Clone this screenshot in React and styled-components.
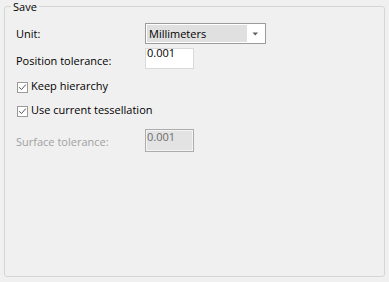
import React from "react";
import styled, { createGlobalStyle } from "styled-components";

const GlobalStyle = createGlobalStyle`
  html, body {
    margin: 0;
    padding: 0;
    background: #f0f0f0;
  }
  body {
    font-family: "Open Sans", "Noto Sans", sans-serif;
    font-size: 11px;
    color: #000;
  }
`;

const Page = styled.div`
  width: 389px;
  height: 282px;
  padding-left: 4px;
  box-sizing: border-box;
`;

const Group = styled.fieldset`
  box-sizing: border-box;
  width: 381px;
  height: 277px;
  margin: 0;
  padding: 0 0 0 11px;
  border: 1px solid #d5d5d5;
  border-radius: 3px;
`;

const Legend = styled.legend`
  margin-left: -5px;
  padding: 0 2px;
  line-height: 13px;
  font-size: 11px;
  color: #000;
`;

const Rows = styled.div`
  display: flex;
  flex-direction: column;
  padding-top: 10px;
`;

const Row = styled.div`
  display: flex;
  align-items: flex-start;
  margin-top: ${(p) => p.$gap || 0}px;
`;

const Label = styled.div`
  width: 129px;
  line-height: 15px;
  padding-top: ${(p) => p.$offset || 0}px;
  color: ${(p) => (p.$disabled ? "#a0a0a0" : "#000")};
  white-space: nowrap;
`;

const Combo = styled.div`
  box-sizing: border-box;
  width: 121px;
  height: 21px;
  border: 1px solid #9c9c9c;
  background: #fff;
  padding: 1px;
  display: flex;
`;

const Selected = styled.div`
  flex: 1;
  background: #e0e0e0;
  padding-left: 2px;
  line-height: 17px;
  color: #000;
`;

const Arrow = styled.div`
  width: 17px;
  display: flex;
  align-items: center;
  justify-content: center;
`;

const TextBox = styled.div`
  box-sizing: border-box;
  width: 49px;
  height: ${(p) => (p.$disabled ? 23 : 21)}px;
  border: 1px solid ${(p) => (p.$disabled ? "#acacac" : "#d9d9d9")};
  box-shadow: ${(p) => (p.$disabled ? "inset 0 0 0 1px #f4f4f4" : "none")};
  background: ${(p) => (p.$disabled ? "#e3e3e3" : "#fff")};
  color: ${(p) => (p.$disabled ? "#6d6d6d" : "#000")};
  padding: ${(p) => (p.$disabled ? "1px 1px 0 1px" : "0 1px")};
  line-height: ${(p) => (p.$disabled ? 12 : 8)}px;
`;

const CheckRow = styled.div`
  display: flex;
  align-items: flex-start;
  line-height: 15px;
  margin-top: ${(p) => p.$gap || 0}px;
`;

const Box = styled.div`
  box-sizing: border-box;
  width: 11px;
  height: 11px;
  margin: 4px 3px 0 1px;
  border: 1px solid #9a9a9a;
  background: #fff;
  display: flex;
  align-items: center;
  justify-content: center;
`;

function Check({ children, gap }) {
  return (
    <CheckRow $gap={gap}>
      <Box>
        <svg width="9" height="9" viewBox="0 0 9 9">
          <path d="M1.2 4.2 L3.4 6.6 L7.8 1.6" fill="none" stroke="#555" strokeWidth="1" />
        </svg>
      </Box>
      <span>{children}</span>
    </CheckRow>
  );
}

export default function App() {
  return (
    <Page>
      <GlobalStyle />
      <Group>
        <Legend>Save</Legend>
        <Rows>
          <Row>
            <Label $offset={3}>Unit:</Label>
            <Combo>
              <Selected>Millimeters</Selected>
              <Arrow>
                <svg width="7" height="4" viewBox="0 0 7 4">
                  <path d="M0.5 0.5 H6 L3.3 3.5 Z" fill="#606060" />
                </svg>
              </Arrow>
            </Combo>
          </Row>
          <Row $gap={4}>
            <Label $offset={5}>Position tolerance:</Label>
            <TextBox>0.001</TextBox>
          </Row>
          <Check gap={9}>Keep hierarchy</Check>
          <Check gap={9}>Use current tessellation</Check>
          <Row $gap={12}>
            <Label $offset={5} $disabled>
              Surface tolerance:
            </Label>
            <TextBox $disabled>0.001</TextBox>
          </Row>
        </Rows>
      </Group>
    </Page>
  );
}
